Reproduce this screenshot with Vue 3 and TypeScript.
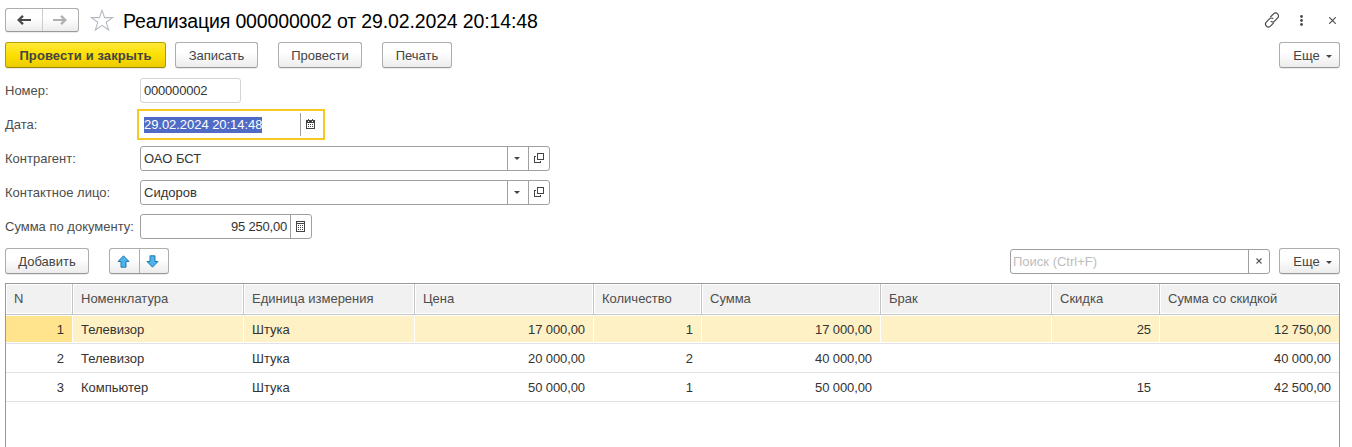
<script setup lang="ts">
interface Column { title: string; key: keyof Row; numeric: boolean }
interface Row {
  n: string; item: string; unit: string; price: string; qty: string
  sum: string; defect: string; discount: string; total: string
}

const columns: Column[] = [
  { title: 'N', key: 'n', numeric: true },
  { title: 'Номенклатура', key: 'item', numeric: false },
  { title: 'Единица измерения', key: 'unit', numeric: false },
  { title: 'Цена', key: 'price', numeric: true },
  { title: 'Количество', key: 'qty', numeric: true },
  { title: 'Сумма', key: 'sum', numeric: true },
  { title: 'Брак', key: 'defect', numeric: false },
  { title: 'Скидка', key: 'discount', numeric: true },
  { title: 'Сумма со скидкой', key: 'total', numeric: true },
]

const rows: Row[] = [
  { n: '1', item: 'Телевизор', unit: 'Штука', price: '17 000,00', qty: '1', sum: '17 000,00', defect: '', discount: '25', total: '12 750,00' },
  { n: '2', item: 'Телевизор', unit: 'Штука', price: '20 000,00', qty: '2', sum: '40 000,00', defect: '', discount: '', total: '40 000,00' },
  { n: '3', item: 'Компьютер', unit: 'Штука', price: '50 000,00', qty: '1', sum: '50 000,00', defect: '', discount: '15', total: '42 500,00' },
]

const references = [
  { label: 'Контрагент:', value: 'ОАО БСТ' },
  { label: 'Контактное лицо:', value: 'Сидоров' },
]
</script>

<template>
  <main class="form">
    <header class="titlebar">
      <div class="nav">
        <button class="nav-btn" aria-label="Назад">
          <svg width="14" height="10" viewBox="0 0 14 10"><path d="M14 5H3" stroke="#4a4a4a" stroke-width="2" /><path d="M6 .8L1.6 5L6 9.2" fill="none" stroke="#4a4a4a" stroke-width="2.3" /></svg>
        </button>
        <button class="nav-btn" aria-label="Вперед">
          <svg width="14" height="10" viewBox="0 0 14 10"><path d="M0 5H11" stroke="#b0b0b0" stroke-width="2" /><path d="M8 .8L12.4 5L8 9.2" fill="none" stroke="#b0b0b0" stroke-width="2.3" /></svg>
        </button>
      </div>
      <svg class="star" width="24" height="23" viewBox="0 0 24 23"><path d="M12 1.3L14.6 8.6H22.6L16.2 13.3L18.7 21L12 16.3L5.3 21L7.8 13.3L1.4 8.6H9.4Z" fill="#fff" stroke="#b4bac3" stroke-width="1.1" /></svg>
      <h1 class="title">Реализация 000000002 от 29.02.2024 20:14:48</h1>
      <div class="window-tools">
        <svg width="16" height="16" viewBox="0 0 16 16" fill="none" stroke="#4a4a4a" stroke-width="1.2">
          <path d="M6.3 5.1L9.3 2.1C10.6.8 12.4.7 13.6 1.9C14.8 3.1 14.8 4.9 13.5 6.2L10.6 9.1C9.4 10.3 7.9 10.3 6.8 9.2" />
          <path d="M9.7 10.9L6.7 13.9C5.4 15.2 3.6 15.3 2.4 14.1C1.2 12.9 1.2 11.1 2.5 9.8L5.4 6.9C6.6 5.7 8.1 5.7 9.2 6.8" />
        </svg>
        <svg width="3" height="11" viewBox="0 0 3 11" fill="#4a4a4a"><circle cx="1.5" cy="1.5" r="1.4" /><circle cx="1.5" cy="5.5" r="1.4" /><circle cx="1.5" cy="9.5" r="1.4" /></svg>
        <svg width="7" height="7" viewBox="0 0 7 7"><path d="M.2.2L6.8 6.8M6.8.2L.2 6.8" stroke="#4a4a4a" stroke-width="1.1" /></svg>
      </div>
    </header>

    <div class="commands">
      <button class="btn primary">Провести и закрыть</button>
      <button class="btn save">Записать</button>
      <button class="btn post">Провести</button>
      <button class="btn print">Печать</button>
      <button class="btn more">Еще<i class="caret" /></button>
    </div>

    <section class="fields">
      <div class="field">
        <label>Номер:</label>
        <div class="input number"><span class="value digits">000000002</span></div>
      </div>
      <div class="field">
        <label>Дата:</label>
        <div class="input date">
          <span class="value"><mark>29.02.2024 20:14:48</mark></span>
          <span class="side">
            <svg width="9" height="10" viewBox="0 0 9 10" shape-rendering="crispEdges"><path d="M0 1H9V10H0ZM1 4V9H8V4ZM2 0H3V1H2ZM6 0H7V1H6Z" fill="#444" fill-rule="evenodd" /><path d="M2 2H3V3H2ZM6 2H7V3H6Z" fill="#fff" /><path d="M2 5H3V6H2ZM4 5H5V6H4ZM6 5H7V6H6ZM2 7H3V8H2ZM4 7H5V8H4ZM6 7H7V8H6Z" fill="#444" /></svg>
          </span>
        </div>
      </div>
      <div v-for="reference in references" :key="reference.label" class="field">
        <label>{{ reference.label }}</label>
        <div class="input reference">
          <span class="value">{{ reference.value }}</span>
          <span class="side"><i class="caret" /></span>
          <span class="side">
            <svg width="10" height="10" viewBox="0 0 10 10" fill="none" stroke="#444" shape-rendering="crispEdges"><path d="M3.5.5H9.5V6.5H3.5ZM2 3.5H.5V9.5H6.5V8" /></svg>
          </span>
        </div>
      </div>
      <div class="field">
        <label>Сумма по документу:</label>
        <div class="input amount">
          <span class="value digits">95 250,00</span>
          <span class="side">
            <svg width="9" height="11" viewBox="0 0 9 11" shape-rendering="crispEdges"><path d="M.5.5H8.5V10.5H.5Z" fill="none" stroke="#444" /><path d="M1 2H8V3H1ZM2 4H3V5H2ZM4 4H5V5H4ZM6 4H7V5H6ZM2 6H3V7H2ZM4 6H5V7H4ZM6 6H7V7H6ZM2 8H3V9H2ZM4 8H5V9H4ZM6 8H7V9H6Z" fill="#444" /></svg>
          </span>
        </div>
      </div>
    </section>

    <div class="table-tools">
      <button class="btn add">Добавить</button>
      <div class="movers">
        <button aria-label="Вверх"><svg width="13" height="13" viewBox="0 0 13 13"><path d="M6.5.8L12 6.5H9V12.2H4V6.5H1Z" fill="#4db3ee" stroke="#2479ab" /></svg></button>
        <button aria-label="Вниз"><svg width="13" height="13" viewBox="0 0 13 13"><path d="M6.5 12.2L12 6.5H9V.8H4V6.5H1Z" fill="#4db3ee" stroke="#2479ab" /></svg></button>
      </div>
      <div class="input search">
        <span class="value">Поиск (Ctrl+F)</span>
        <span class="side"><svg width="6" height="6" viewBox="0 0 6 6"><path d="M.5.5L5.5 5.5M5.5.5L.5 5.5" stroke="#555" stroke-width="1.1" /></svg></span>
      </div>
      <button class="btn more">Еще<i class="caret" /></button>
    </div>

    <section class="table">
      <div class="row head">
        <div v-for="column in columns" :key="column.key" class="cell"><span>{{ column.title }}</span></div>
      </div>
      <div v-for="(row, index) in rows" :key="row.n" class="row" :class="{ selected: index === 0 }">
        <div v-for="column in columns" :key="column.key" class="cell" :class="{ numeric: column.numeric }">{{ row[column.key] }}</div>
      </div>
    </section>
  </main>
</template>

<style>
body { margin: 0; background: #fff; overflow: hidden; }
</style>

<style scoped>
* { box-sizing: border-box; }
.form {
  display: flex; flex-direction: column;
  width: 1352px; height: 447px; padding: 8px 12px 0 5px; overflow: hidden;
  background: #fff; color: #333;
  font: 13px/16px "Liberation Sans", Arial, sans-serif;
}
button { margin: 0; padding: 0; font: inherit; }
svg { display: block; flex: none; }
.titlebar { display: flex; align-items: flex-start; height: 34px; flex: none; }
.nav, .movers {
  display: flex; border: 1px solid #adadad; border-bottom-color: #999; border-radius: 3px;
  background: linear-gradient(#fff 40%, #ececec); box-shadow: 0 1px 0 rgba(0, 0, 0, .08);
}
.nav { width: 74px; height: 24px; }
.nav button, .movers button {
  display: flex; flex: 1; align-items: center; justify-content: center; border: 0; background: none;
}
.nav button + button { border-left: 1px solid #ccc; }
.star { margin: 1px 0 0 11px; }
.title { margin: 0 0 0 9px; color: #000; font-size: 19.5px; letter-spacing: -.14px; line-height: 26px; font-weight: 400; white-space: nowrap; }
.window-tools { display: flex; align-items: center; height: 24px; margin-left: auto; padding-right: 4px; }
.window-tools svg:nth-child(2) { margin: 0 26px 0 20px; }

.commands, .table-tools { display: flex; height: 26px; flex: none; }
.btn {
  display: flex; align-items: center; justify-content: center; height: 26px;
  padding-top: 1px;
  border: 1px solid #adadad; border-bottom-color: #999; border-radius: 3px;
  background: linear-gradient(#fff 40%, #ececec); box-shadow: 0 1px 0 rgba(0, 0, 0, .08);
  color: #444; white-space: nowrap;
}
.primary {
  width: 161px; border-color: #b8a000 #b09a00 #9c8800; font-weight: 700; letter-spacing: .1px;
  background: linear-gradient(#ffe83b, #fddf00 50%, #eccc00);
}
.save { width: 83px; margin-left: 9px; }
.post { width: 84px; margin-left: 20px; }
.print { width: 70px; margin-left: 20px; }
.more { width: 61px; gap: 6px; padding-left: 6px; }
.commands .more { margin-left: auto; margin-right: 0; }
.caret { width: 0; height: 0; border: 3px solid transparent; border-top-color: #444; border-bottom: 0; }
.more .caret { margin-top: 2px; }

.fields { display: flex; flex-direction: column; gap: 9px; margin-top: 10px; }
.field { display: flex; align-items: center; height: 25px; }
.field label { width: 135px; color: #4d4d4d; white-space: nowrap; }
.input { display: flex; height: 25px; border: 1px solid #a0a0a0; border-radius: 3px; background: #fff; }
.value { flex: 1; padding-left: 3px; line-height: 23px; white-space: nowrap; }
.digits { letter-spacing: -.2px; }
.side { display: flex; align-items: center; justify-content: center; width: 21px; padding: 0 1px 1px 0; border-left: 1px solid #a0a0a0; }
.number { width: 101px; border-color: #d4d4d4; }
.date { width: 188px; height: 31px; margin-left: -3px; padding: 2px; border: 2px solid #f9c923; border-radius: 0; }
.date mark { display: inline-block; height: 16px; line-height: 16px; letter-spacing: -.05px; background: #4f6bc6; color: #fff; }
.date .side { padding-right: 2px; }
.reference { width: 410px; }
.reference .side:last-child { padding-right: 0; }
.reference .side:nth-last-child(2) { padding-right: 2px; }
.amount { width: 172px; }
.amount .value { padding: 0 3px 0 0; text-align: right; }

.table-tools { margin-top: 9px; }
.add { width: 84px; }
.movers { width: 60px; height: 26px; margin-left: 20px; }
.movers button { padding-right: 2px; }
.movers button + button { border-left: 1px solid #adadad; }
.search { width: 260px; margin: 1px 9px 0 auto; }
.search .value { padding-left: 2px; color: #bdbdbd; }

.table { width: 1335px; height: 180px; margin-top: 9px; flex: none; border: 1px solid #999; border-bottom: 0; }
.row { display: grid; grid-template-columns: 67px 171px 171px 179px 108px 179px 171px 108px 179px; height: 29px; border-bottom: 1px solid #e2e2e2; }
.cell { padding: 0 8px; line-height: 30px; border-right: 1px solid transparent; white-space: nowrap; }
.numeric { text-align: right; letter-spacing: -.1px; }
.head { height: 31px; border-bottom-color: #c6c6c6; color: #4d4d4d; }
.head .cell { padding: 1px; line-height: 28px; border-right-color: #c6c6c6; }
.head .cell:last-child, .row .cell:last-child { border-right: 0; }
.head span { display: block; height: 28px; padding-left: 7px; background: #f1f1f1; }
.selected { padding: 1px 0; }
.selected .cell { height: 26px; line-height: 28px; border-right-color: #fff; background: #fdf1c5; }
.selected .cell:first-child { background: #ffe48d; }
</style>
